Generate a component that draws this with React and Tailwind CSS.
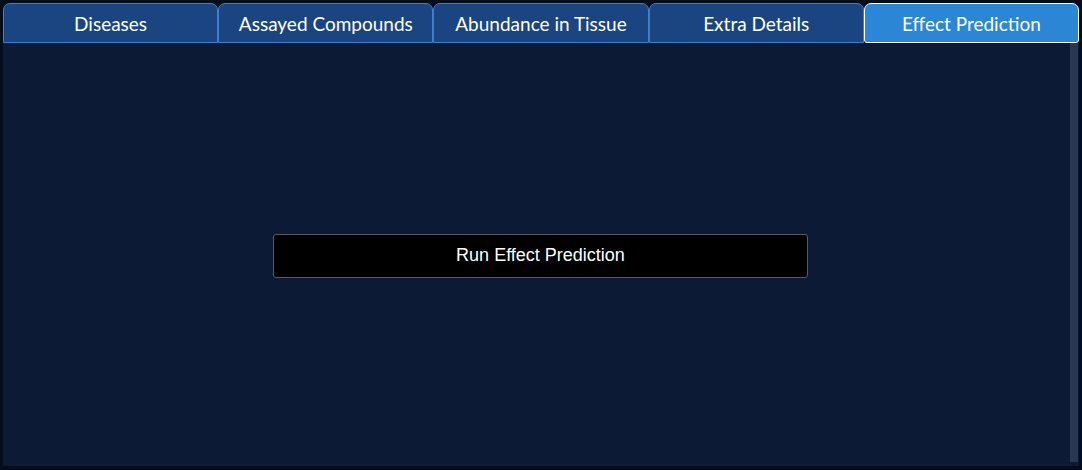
import React, { useState } from "react";

const tabs = [
  "Diseases",
  "Assayed Compounds",
  "Abundance in Tissue",
  "Extra Details",
  "Effect Prediction",
];

const App = () => {
  const [active, setActive] = useState(4);

  return (
    <div className="w-[1082px] h-[470px] bg-[#060d1a] p-[3px] flex flex-col" style={{ fontFamily: "Lato, 'Noto Sans', sans-serif" }}>
      {/* Tabs */}
      <div className="flex h-[40px]">
        {tabs.map((t, i) => (
          <button
            key={t}
            onClick={() => setActive(i)}
            className={
              i === active
                ? "flex-1 rounded-t-[7px] rounded-b-[3px] border border-white bg-[#2b86d6] text-white text-[19px] pt-[2px] flex items-center justify-center"
                : "flex-1 rounded-t-[7px] border border-[#3b7fd0] bg-[#1b4580] text-white text-[19px] pt-[2px] flex items-center justify-center"
            }
          >
            {t}
          </button>
        ))}
      </div>

      {/* Panel */}
      <div className="flex-1 flex bg-[#0c1a35] mb-[1px]">
        <div className="flex-1 flex items-center justify-center">
          <button
            className="w-[535px] h-[44px] bg-black border border-[#5a5a5a] rounded-[3px] text-white text-[18px] translate-x-[4px] translate-y-[1px]"
            style={{ fontFamily: "'Liberation Sans', Arial, sans-serif" }}
          >
            Run Effect Prediction
          </button>
        </div>
        {/* Scrollbar */}
        <div className="w-[8px] bg-[#2b3651] mr-[1px] mb-[4px]"></div>
      </div>
    </div>
  );
};

export default App;
